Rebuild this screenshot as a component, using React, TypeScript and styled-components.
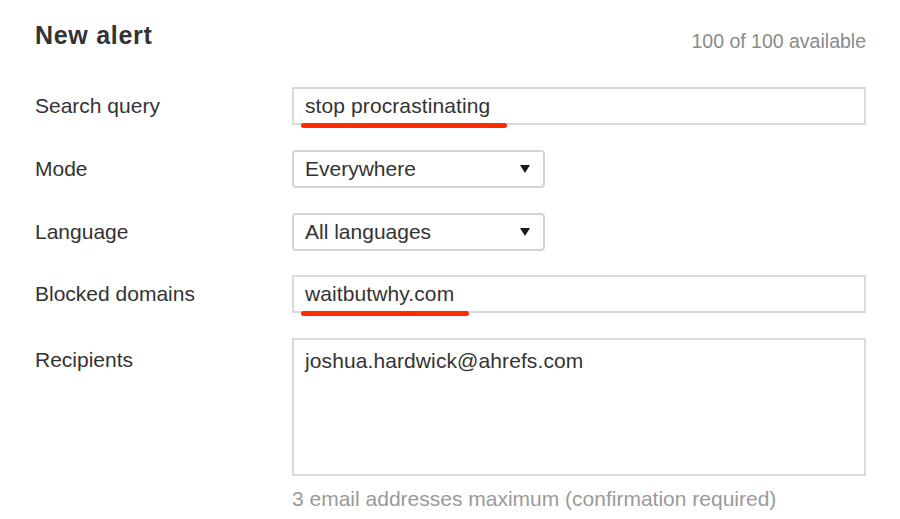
import * as React from "react";
import styled, { createGlobalStyle } from "styled-components";

const GlobalStyle = createGlobalStyle`
  html, body {
    margin: 0;
    padding: 0;
    background: #FFFFFF;
  }
  body {
    font-family: "Liberation Sans", Arial, sans-serif;
    color: #333333;
  }
`;

const Page = styled.div`
  width: 900px;
  height: 519px;
  box-sizing: border-box;
  padding: 0 34px 0 35px;
  overflow: hidden;
`;

const Header = styled.div`
  display: flex;
  justify-content: space-between;
  align-items: baseline;
  height: 87px;
  padding-top: 19px;
  box-sizing: border-box;
`;

const Title = styled.h1`
  margin: 0;
  font-size: 25px;
  line-height: 32px;
  font-weight: 700;
  letter-spacing: 0.7px;
  color: #333333;
`;

const Quota = styled.div`
  font-size: 19.5px;
  line-height: 24px;
  color: #8A8A8A;
  position: relative;
  top: 4px;
`;

const Form = styled.div`
  display: grid;
  grid-template-columns: 257px 1fr;
  grid-template-rows: 38px 38px 38px 38px 138px auto;
  row-gap: 24.75px;
`;

const Label = styled.div<{ $top?: boolean }>`
  font-size: 21px;
  line-height: 24px;
  color: #333333;
  align-self: ${(p) => (p.$top ? "start" : "center")};
  padding-top: ${(p) => (p.$top ? "10px" : "0")};
`;

const Field = styled.div`
  position: relative;
  display: flex;
`;

const TextBox = styled.div<{ $tall?: boolean }>`
  position: relative;
  box-sizing: border-box;
  width: 100%;
  height: ${(p) => (p.$tall ? "138px" : "38px")};
  border: 2px solid #DADADA;
  padding: ${(p) => (p.$tall ? "9px 11px" : "0 11px")};
  display: flex;
  align-items: ${(p) => (p.$tall ? "flex-start" : "center")};
  font-size: 21px;
  line-height: 24px;
  letter-spacing: 0.1px;
  color: #333333;
  background: #FFFFFF;
`;

const Select = styled.div`
  box-sizing: border-box;
  width: 253px;
  height: 38px;
  border: 2px solid #D4D4D4;
  border-radius: 4px;
  padding: 0 12px 0 11px;
  display: flex;
  align-items: center;
  justify-content: space-between;
  font-size: 21px;
  line-height: 24px;
  color: #333333;
  background: #FFFFFF;
`;

const Arrow = styled.span`
  width: 0;
  height: 0;
  border-left: 5.5px solid transparent;
  border-right: 5.5px solid transparent;
  border-top: 8px solid #1A1A1A;
  margin-right: 1px;
`;

const Marked = styled.span`
  position: relative;
`;

const Underline = styled.span<{ $extra: number }>`
  position: absolute;
  left: -4px;
  right: ${(p) => -p.$extra}px;
  bottom: -10px;
  height: 5px;
  border-radius: 3px;
  background: #FF2A00;
`;

const Hint = styled.div`
  grid-column: 2;
  margin-top: -14px;
  font-size: 21px;
  line-height: 24px;
  color: #9A9A9A;
`;

export default function App() {
  return (
    <Page>
      <GlobalStyle />
      <Header>
        <Title>New alert</Title>
        <Quota>100 of 100 available</Quota>
      </Header>
      <Form>
        <Label>Search query</Label>
        <Field>
          <TextBox>
            <Marked>
              stop procrastinating
              <Underline $extra={17} />
            </Marked>
          </TextBox>
        </Field>

        <Label>Mode</Label>
        <Field>
          <Select>
            Everywhere
            <Arrow />
          </Select>
        </Field>

        <Label>Language</Label>
        <Field>
          <Select>
            All languages
            <Arrow />
          </Select>
        </Field>

        <Label>Blocked domains</Label>
        <Field>
          <TextBox>
            <Marked>
              waitbutwhy.com
              <Underline $extra={15} />
            </Marked>
          </TextBox>
        </Field>

        <Label $top>Recipients</Label>
        <Field>
          <TextBox $tall>joshua.hardwick@ahrefs.com</TextBox>
        </Field>

        <Hint>3 email addresses maximum (confirmation required)</Hint>
      </Form>
    </Page>
  );
}
